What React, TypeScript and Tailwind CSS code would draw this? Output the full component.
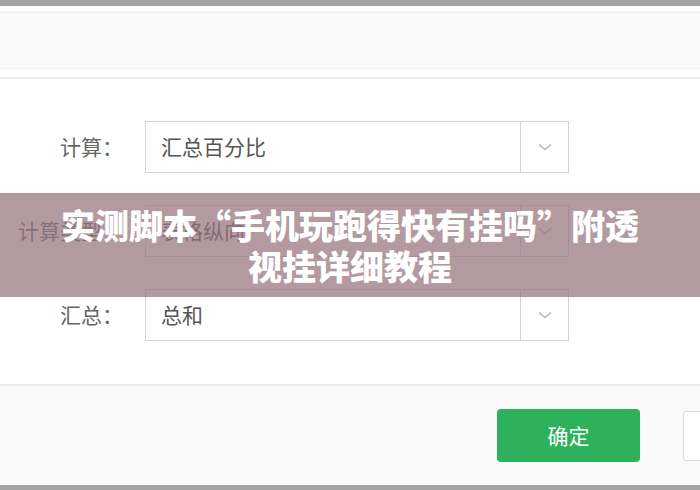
import React from "react";

function Chevron() {
  return (
    <svg width="16" height="10" viewBox="0 0 16 10" fill="none">
      <path d="M2 2.5 L8 7.5 L14 2.5" stroke="#b5b5b5" strokeWidth="1.6" />
    </svg>
  );
}

function Row({ label, value }: { label: string; value: string }) {
  return (
    <div className="flex items-center h-[52px]">
      <div className="w-[145px] shrink-0 pr-[22px] text-right text-[21px] text-[#666] whitespace-nowrap">{label}</div>
      <div className="flex h-[52px] w-[424px] shrink-0 border border-[#d4d4d4] bg-white">
        <div className="flex-1 flex items-center pl-[15px] text-[21px] text-[#555]">{value}</div>
        <div className="w-[48px] border-l border-[#d4d4d4] flex items-center justify-center">
          <Chevron />
        </div>
      </div>
    </div>
  );
}

export default function App() {
  return (
    <div
      className="relative w-[700px] h-[490px] overflow-hidden bg-white flex flex-col"
      style={{ fontFamily: '"Noto Sans CJK SC", "Noto Sans", sans-serif' }}
    >
      <div className="h-[6px] bg-[#a3a3a3] shrink-0" />
      <div className="h-[5px] bg-white shrink-0" />
      <div className="h-[58px] bg-[#fafafa] border-t-[3px] border-[#f4f4f4] border-b border-b-[#efefef] shrink-0" />
      <div className="h-[10px] bg-white border-b-[2px] border-[#eeeeee] shrink-0" />
      <div className="flex-1 flex flex-col gap-[32px] pt-[42px]">
        <Row label="计算：" value="汇总百分比" />
        <Row label="计算类型：" value="表格纵向" />
        <Row label="汇总：" value="总和" />
      </div>
      <div className="h-[101px] bg-[#fafafa] border-t-[2px] border-[#ececec] flex items-center pl-[497px] gap-[43px] shrink-0">
        <div className="w-[143px] h-[53px] shrink-0 rounded-[4px] bg-[#2db25b] text-white text-[21px] flex items-center justify-center">
          确定
        </div>
        <div className="w-[60px] h-[50px] shrink-0 rounded-[3px] bg-white border border-[#d9d9d9]" />
      </div>
      <div className="h-[5px] bg-[#a3a3a3] shrink-0" />
      <div className="absolute left-0 top-[193px] w-full h-[104px] bg-[rgba(150,115,125,0.72)] flex flex-col items-center justify-center text-white font-black text-[34px] leading-[41px] text-center whitespace-nowrap">
        <div>实测脚本“手机玩跑得快有挂吗”附透</div>
        <div>视挂详细教程</div>
      </div>
    </div>
  );
}
